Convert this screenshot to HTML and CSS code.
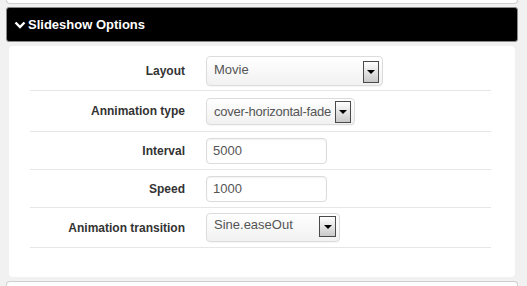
FILE: index.html
```html
<!DOCTYPE html>
<html lang="en">
<head>
<meta charset="UTF-8" />
<title>Slideshow Options</title>
<link rel="stylesheet" href="styles.css">
</head>
<body>
<div class="panel-prev"></div>

<div class="panel-head">
	<svg class="chevron" width="12" height="8" viewBox="0 0 12 8"><polyline points="1.5,1.5 6,6 10.5,1.5" fill="none" stroke="#fff" stroke-width="2.4"/></svg>
	<span>Slideshow Options</span>
</div>

<div class="panel-body">
	<div class="row row-a">
		<label>Layout</label>
		<div class="select select-layout"><span>Movie</span><i class="arrow"></i></div>
	</div>
	<div class="row row-b">
		<label>Annimation type</label>
		<div class="select select-type"><span>cover-horizontal-fade</span><i class="arrow"></i></div>
	</div>
	<div class="row">
		<label>Interval</label>
		<input type="text" value="5000" />
	</div>
	<div class="row">
		<label>Speed</label>
		<input type="text" value="1000" />
	</div>
	<div class="row row-a">
		<label>Animation transition</label>
		<div class="select select-trans"><span>Sine.easeOut</span><i class="arrow"></i></div>
	</div>
</div>

<div class="panel-next"></div>
</body>
</html>
```
FILE: styles.css
```css
* {
	margin: 0;
	padding: 0;
	box-sizing: border-box;
}

body {
	background: #f1f1f1;
	font: 13px "Liberation Sans", Arial, sans-serif;
	overflow: hidden;
}

.panel-prev {
	height: 4px;
	margin: 0 9px 0 6px;
	background: #fff;
	border: 1px solid #cfcfcf;
	border-top: none;
	border-radius: 0 0 4px 4px;
}

.panel-head {
	display: flex;
	align-items: center;
	height: 35px;
	margin: 3px 9px 0 6px;
	padding-left: 7px;
	background: #000;
	border: 1px solid #8a8a8a;
	border-radius: 3px;
	color: #fff;
	font-weight: bold;
	font-size: 13px;
}

.chevron {
	margin: 1px 2px 0 0;
}

.panel-body {
	margin: 4px 12px 0 9px;
	padding: 5px 24px 29px 21px;
	background: #fff;
	border-radius: 4px;
}

.row {
	display: flex;
	align-items: center;
	height: 38px;
	border-bottom: 1px solid #e6e6e6;
}

.row-a {
	height: 40px;
}

.row-b {
	height: 41px;
}

.row label {
	width: 155px;
	margin-right: 21px;
	text-align: right;
	font-weight: bold;
	font-size: 12px;
	color: #333;
}

.select {
	display: flex;
	justify-content: space-between;
	align-items: flex-start;
	padding: 4px 3px 0 7px;
	background: linear-gradient(#fff, #f1f1f1);
	border: 1px solid #dcdcdc;
	border-radius: 4px;
	box-shadow: 0 1px 1px rgba(0, 0, 0, .04);
	color: #555;
	white-space: nowrap;
}

.select span {
	line-height: 16px;
	margin-top: 1px;
}

.select-layout {
	width: 177px;
	height: 30px;
}

.select-type {
	width: 149px;
	height: 27px;
	padding-top: 2px;
}

.select-type span {
	margin-top: 3px;
	letter-spacing: -.25px;
}

.select-trans {
	width: 134px;
	height: 29px;
	padding-top: 2px;
}

.arrow {
	display: flex;
	flex-shrink: 0;
	align-items: center;
	justify-content: center;
	width: 16px;
	height: 22px;
	background: linear-gradient(#fff, #c9c9c9);
	border: 1px solid #4a4a4a;
}

.select-trans .arrow {
	width: 17px;
	height: 21px;
}

.arrow::after {
	content: "";
	border-left: 4px solid transparent;
	border-right: 4px solid transparent;
	border-top: 4px solid #000;
}

input {
	display: block;
	width: 121px;
	height: 26px;
	padding: 0 6px;
	background: #fff;
	border: 1px solid #dcdcdc;
	border-radius: 4px;
	box-shadow: inset 0 1px 2px rgba(0, 0, 0, .06);
	font: 13px "Liberation Sans", Arial, sans-serif;
	color: #555;
}

.panel-next {
	height: 6px;
	margin: 4px 9px 0 6px;
	background: #fff;
	border: 1px solid #cfcfcf;
	border-bottom: none;
	border-radius: 4px 4px 0 0;
}
```
